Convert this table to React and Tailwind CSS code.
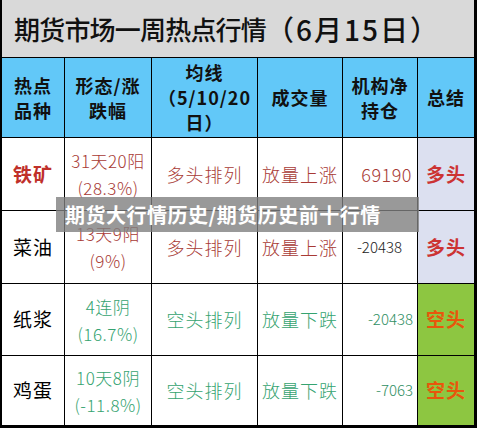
const rows = [
  {
    name: "铁矿",
    nameCls: "text-[#c0302a] font-bold",
    shape: ["31天20阳", "(28.3%)"],
    ma: "多头排列",
    vol: "放量上涨",
    pos: "69190",
    posCls: "text-[#a83a35] text-[18px] pr-[5px] tracking-[0.5px]",
    tone: "text-[#a83a35]",
    sum: "多头",
    sumCls: "bg-[#dce0f0] text-[#cc3333]",
  },
  {
    name: "菜油",
    nameCls: "text-black",
    shape: ["13天9阳", "(9%)"],
    ma: "多头排列",
    vol: "放量上涨",
    pos: "-20438",
    posCls: "text-[#222] text-[15px] pr-[15px]",
    tone: "text-[#a83a35]",
    sum: "多头",
    sumCls: "bg-[#dce0f0] text-[#cc3333]",
  },
  {
    name: "纸浆",
    nameCls: "text-black",
    shape: ["4连阴", "(16.7%)"],
    ma: "空头排列",
    vol: "放量下跌",
    pos: "-20438",
    posCls: "text-[#2f8f63] text-[15px] pr-[4px]",
    tone: "text-[#35a370]",
    sum: "空头",
    sumCls: "bg-[#8dc641] text-[#e8560c]",
  },
  {
    name: "鸡蛋",
    nameCls: "text-black",
    shape: ["10天8阴", "(-11.8%)"],
    ma: "空头排列",
    vol: "放量下跌",
    pos: "-7063",
    posCls: "text-[#2f8f63] text-[15px] pr-[4px]",
    tone: "text-[#35a370]",
    sum: "空头",
    sumCls: "bg-[#8dc641] text-[#e8560c]",
  },
];

const headers = [
  ["热点", "品种"],
  ["形态/涨", "跌幅"],
  ["均线", "（5/10/20", "日）"],
  ["成交量"],
  ["机构净", "持仓"],
  ["总结"],
];

export default function App() {
  return (
    <div
      className="relative w-[477px] h-[430px] bg-white overflow-hidden"
      style={{ fontFamily: '"Noto Sans CJK SC", "Noto Sans", sans-serif' }}
    >
      <div className="grid grid-cols-[62px_86px_105px_84px_74px_56px] grid-rows-[57px_79px_72px_72px_71px_69px] gap-px bg-black border-l-2 border-r-[3px] border-b-[3px] border-black">
        {/* Title */}
        <div className="col-span-6 bg-[#d9d9d9] flex items-center pl-[12px] text-[26px] font-medium text-[#111] whitespace-nowrap">
          <span className="tracking-[-0.8px]">期货市场一周热点行情</span>
          <span className="text-[28px] tracking-[2px]">（6月15日）</span>
        </div>

        {/* Header */}
        {headers.map((lines, i) => (
          <div
            key={i}
            className="bg-[#62c8f8] flex flex-col items-center justify-center text-[18px] font-bold text-[#111] leading-[25px] tracking-[1px]"
          >
            {lines.map((l) => (
              <span key={l}>{l}</span>
            ))}
          </div>
        ))}

        {/* Rows */}
        {rows.map((r) => (
          <div key={r.name} className="contents">
            <div className={`bg-white flex items-center justify-center text-[19px] tracking-[1px] ${r.nameCls}`}>
              {r.name}
            </div>
            <div className={`bg-white flex flex-col items-center justify-center text-[17px] font-light leading-[27px] tracking-[0.5px] ${r.tone}`}>
              <span>{r.shape[0]}</span>
              <span>{r.shape[1]}</span>
            </div>
            <div className={`bg-white flex items-center justify-center text-[18px] font-light tracking-[1px] ${r.tone}`}>
              {r.ma}
            </div>
            <div className={`bg-white flex items-center justify-center text-[18px] font-light tracking-[1px] ${r.tone}`}>
              {r.vol}
            </div>
            <div className={`bg-white flex items-center justify-end font-light ${r.posCls}`}>
              {r.pos}
            </div>
            <div className={`flex items-center justify-center text-[19px] font-bold tracking-[1px] ${r.sumCls}`}>
              {r.sum}
            </div>
          </div>
        ))}
      </div>

      {/* Watermark band */}
      <div className="absolute left-[56px] top-[197px] w-[363px] h-[35px] bg-[#808080]/80 flex items-center pl-[9px] text-white text-[20px] font-bold tracking-[0.5px]">
        期货大行情历史/期货历史前十行情
      </div>
    </div>
  );
}
